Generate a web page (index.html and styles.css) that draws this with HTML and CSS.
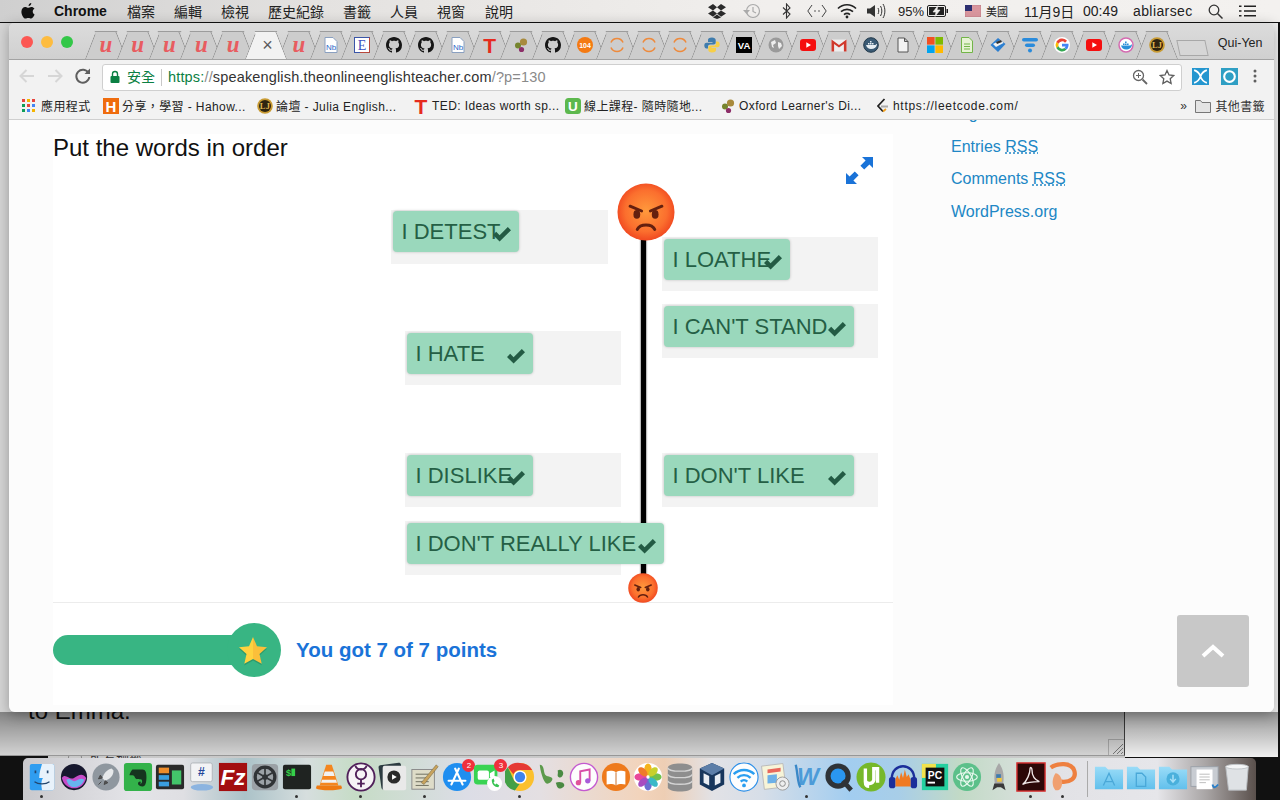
FILE: index.html
```html
<!DOCTYPE html>
<html lang="zh-Hant">
<head>
	<meta charset="UTF-8">
	<title>Put the words in order</title>
	<link rel="stylesheet" href="styles.css">
</head>
<body>

<svg class="defs" xmlns="http://www.w3.org/2000/svg">
	<defs>
		<radialGradient id="faceFill" cx="50%" cy="48%" r="56%">
			<stop offset="0%" stop-color="#ff9a3c"/>
			<stop offset="65%" stop-color="#fb6f2e"/>
			<stop offset="100%" stop-color="#ee3f1d"/>
		</radialGradient>
		<linearGradient id="folderFill" x1="0" y1="0" x2="0" y2="1">
			<stop offset="0%" stop-color="#9adcf8"/>
			<stop offset="100%" stop-color="#62c0ec"/>
		</linearGradient>
	</defs>

	<symbol id="face" viewBox="0 0 60 60">
		<circle cx="30" cy="30" r="29.5" fill="url(#faceFill)"/>
		<path d="M13.5 24l12 5M46.5 24l-12 5" stroke="#64200f" stroke-width="3" stroke-linecap="round"/>
		<ellipse cx="20.5" cy="32.5" rx="3.5" ry="4.5" fill="#64200f"/>
		<ellipse cx="39.5" cy="32.5" rx="3.5" ry="4.5" fill="#64200f"/>
		<path d="M21 48c3-6 15-6 18 0" fill="none" stroke="#64200f" stroke-width="3.2" stroke-linecap="round"/>
	</symbol>
	<symbol id="check" viewBox="0 0 20 16">
		<path d="M1 9l3.2-3.2 3.4 3.4L15.8 1 19 4.2 7.6 15.6z" fill="#235b44"/>
	</symbol>

	<!-- tab favicons -->
	<symbol id="f-gh" viewBox="0 0 16 16"><path fill="#161616" d="M8 0C3.58 0 0 3.58 0 8c0 3.54 2.29 6.53 5.47 7.59.4.07.55-.17.55-.38 0-.19-.01-.82-.01-1.49-2.01.37-2.53-.49-2.69-.94-.09-.23-.48-.94-.82-1.13-.28-.15-.68-.52-.01-.53.63-.01 1.08.58 1.23.82.72 1.21 1.87.87 2.33.66.07-.52.28-.87.51-1.07-1.78-.2-3.64-.89-3.64-3.95 0-.87.31-1.59.82-2.15-.08-.2-.36-1.02.08-2.12 0 0 .67-.21 2.2.82.64-.18 1.32-.27 2-.27.68 0 1.36.09 2 .27 1.53-1.04 2.2-.82 2.2-.82.44 1.1.16 1.92.08 2.12.51.56.82 1.27.82 2.15 0 3.07-1.87 3.75-3.65 3.95.29.25.54.73.54 1.48 0 1.07-.01 1.93-.01 2.2 0 .21.15.46.55.38A8.013 8.013 0 0016 8c0-4.42-3.58-8-8-8z"/></symbol>
	<symbol id="f-ox" viewBox="0 0 16 16"><circle cx="10.5" cy="5" r="3.6" fill="#a88a3c"/><circle cx="5" cy="8.5" r="3" fill="#76852e"/><circle cx="8.5" cy="12.5" r="2.6" fill="#8c2e68"/></symbol>
	<symbol id="f-ring" viewBox="0 0 16 16"><path d="M2 5.5a6.5 6.5 0 0 1 12 0M2 10.5a6.5 6.5 0 0 0 12 0" fill="none" stroke="#ee8a3c" stroke-width="1.6"/></symbol>
	<symbol id="f-py" viewBox="0 0 16 16"><path d="M8 .5c-3 0-4 1-4 2.5V5h4.500v.7H2.500C1 5.700.3 7 .3 8.500s.7 3 2.200 3H4V9.600c0-1.300 1-2.100 2.300-2.100h3.400c1.200 0 2-.9 2-2V3c0-1.500-1.500-2.500-3.700-2.500z" fill="#3f7cad"/><path d="M8 15.500c3 0 4-1 4-2.500v-2H7.500v-.7h6c1.500 0 2.200-1.300 2.200-2.800s-.7-3-2.200-3H12v1.900c0 1.300-1 2.100-2.300 2.100H6.300c-1.200 0-2 .9-2 2V13c0 1.500 1.500 2.500 3.700 2.500z" fill="#f7cf47"/></symbol>
	<symbol id="f-globe" viewBox="0 0 16 16"><circle cx="8" cy="8" r="7.5" fill="#9a9a9a"/><path d="M3 5l4-2 1 3-3 2 1 3-2-1zM10 5l3 1 1 3-3 3-1-3z" fill="#eee"/></symbol>
	<symbol id="f-yt" viewBox="0 0 16 16"><rect y="2" width="16" height="12" rx="3" fill="#f50f0f"/><path d="M6.300 5.200L11 8l-4.700 2.800z" fill="#fff"/></symbol>
	<symbol id="f-gm" viewBox="0 0 16 16"><path d="M.5 2.500h15v12h-15z" fill="#eee"/><path d="M.5 14.500v-12L8 8l7.500-5.500v12h-2.600V7L8 10.600 3.100 7v7.500z" fill="#d0392c"/></symbol>
	<symbol id="f-dk" viewBox="0 0 16 16"><circle cx="8" cy="8" r="7.3" fill="#3a5a74" stroke="#22384a"/><path d="M3 8h9.500c.5-1 1.200-1 1.500-.8-.3 3-2.600 4.800-6 4.800-2.500 0-4.200-1.400-5-4z" fill="#e8eef2"/><path d="M5 6h1.500v1.500H5zm2 0h1.500v1.500H7zm2 0h1.500v1.500H9zM7 4h1.500v1.500H7z" fill="#e8eef2"/></symbol>
	<symbol id="f-doc" viewBox="0 0 16 16"><path d="M3 1h6.500L13 4.500V15H3zM9.500 1v3.500H13" fill="#f2f2f2" stroke="#555" stroke-width="1"/></symbol>
	<symbol id="f-ms" viewBox="0 0 16 16"><rect width="7.6" height="7.6" fill="#f25022"/><rect x="8.4" width="7.6" height="7.6" fill="#7fba00"/><rect y="8.4" width="7.6" height="7.6" fill="#00a4ef"/><rect x="8.4" y="8.4" width="7.6" height="7.6" fill="#ffb900"/></symbol>
	<symbol id="f-sheet" viewBox="0 0 16 16"><path d="M2.500.5h7.500l3.500 3.500v11.500h-11z" fill="#e6f3d4" stroke="#72b548"/><path d="M5 7h6M5 9.500h6M5 12h6" stroke="#72b548" stroke-width="1.200"/></symbol>
	<symbol id="f-dia" viewBox="0 0 16 16"><path d="M8 1l7.500 6L8 15 .5 8z" fill="#2d7fd0"/><path d="M3 7l8-4 2.500 3L6 10z" fill="#f1f1f1"/><path d="M6 5l5-2 1 2-5 2z" fill="#333"/></symbol>
	<symbol id="f-fil" viewBox="0 0 16 16"><rect y="1" width="16" height="3.6" rx="1.8" fill="#2a8bdb"/><rect x="3" y="6.4" width="10" height="3.6" rx="1.8" fill="#2a8bdb"/><circle cx="8" cy="13.5" r="2" fill="#2a8bdb"/></symbol>
	<symbol id="f-g" viewBox="0 0 16 16"><circle cx="8" cy="8" r="8" fill="#fff"/><path d="M13 3.800A6.500 6.500 0 0 0 2.300 5l2.300 1.800A3.700 3.700 0 0 1 11 5.800z" fill="#ea4335"/><path d="M2.300 5a6.500 6.500 0 0 0 0 6l2.300-1.800a3.700 3.700 0 0 1 0-2.400z" fill="#fbbc05"/><path d="M2.300 11a6.500 6.500 0 0 0 10.300 1.600l-2.200-1.700A3.700 3.700 0 0 1 4.600 9.200z" fill="#34a853"/><path d="M14.500 6.700H8v2.700h3.600c-.2.700-.6 1.100-1.200 1.500l2.200 1.700c1.500-1.400 2.200-3.500 1.900-5.900z" fill="#4285f4"/></symbol>
	<symbol id="f-dc" viewBox="0 0 16 16"><circle cx="8" cy="8" r="7" fill="#fff" stroke="#d46bb0" stroke-width="1.5"/><path d="M3 8.500h9.500c.5-1 1.200-1 1.500-.8-.3 2.800-2.600 4.800-6 4.800-2.500 0-4.200-1.500-5-4z" fill="#2a8fd8"/><path d="M5 6.500h1.600v1.600H5zm2 0h1.600v1.600H7zm2 0h1.600v1.600H9zM7 4.500h1.600v1.600H7z" fill="#2a8fd8"/></symbol>
	<symbol id="f-lc" viewBox="0 0 16 16"><path d="M10.500 1L4 8l5 5.500" fill="none" stroke="#222" stroke-width="1.800"/><path d="M7 8.500h7" stroke="#aaa" stroke-width="1.800"/><path d="M9 13.500l3-2.500" stroke="#f0a020" stroke-width="1.800"/></symbol>

	<!-- dock icons -->
	<symbol id="d-finder" viewBox="0 0 32 32"><rect x="3" y="2" width="26" height="28" rx="2" fill="#2f9df0"/><path d="M16 2h11a2 2 0 0 1 2 2v24a2 2 0 0 1-2 2H16c-1-6-1-10 1-13h-4c0-6 2-11 3-15z" fill="#e8f2fb"/><path d="M9 9v3M22 9v3" stroke="#23466e" stroke-width="1.8"/><path d="M8 21c4 3 12 3 16 0" fill="none" stroke="#23466e" stroke-width="1.3"/></symbol>
	<symbol id="d-siri" viewBox="0 0 32 32"><circle cx="16" cy="16" r="14" fill="#17182e"/><path d="M3 17c4-6 8 3 13 0s9-6 13 0c-2 8-7 11-13 11S5 24 3 17z" fill="#c64cc8"/><path d="M8 19c4-3 6 3 10 1s6-3 9-1c-2 5-6 8-11 8s-7-4-8-8z" fill="#67b5ee"/></symbol>
	<symbol id="d-rocket" viewBox="0 0 32 32"><circle cx="16" cy="16" r="14.5" fill="#8f979f"/><path d="M22 7c-5 1-8 5-10 10l3 3c5-2 9-5 9-11z" fill="#e6e8ea"/><path d="M12 17l-4 1 2-4zM15 20l-1 4 4-2zM11 21l-3 3" stroke="#444" fill="#555"/></symbol>
	<symbol id="d-ever" viewBox="0 0 32 32"><rect x="1" y="1" width="30" height="30" rx="3" fill="#33b24a"/><path d="M10 8h11c3 0 4 3 4 8 0 6-1 10-4 10-3 0-5-1-5-3s3-3 3-1c-1 0-1 1 0 1 1 0 2-2 1-4-1-1-6 0-7-2-1-2-1-3-3-3H7c0-2 3-6 3-6z" fill="#16351f"/></symbol>
	<symbol id="d-panes" viewBox="0 0 32 32"><rect x="1" y="3" width="30" height="26" rx="2" fill="#2a2a2a"/><rect x="4" y="6" width="11" height="6" fill="#ef8c2a"/><rect x="4" y="14" width="11" height="5" fill="#3a9ee0"/><rect x="4" y="21" width="11" height="5" fill="#3a9ee0"/><rect x="18" y="9" width="10" height="15" fill="#43c46a"/></symbol>
	<symbol id="d-gear" viewBox="0 0 32 32"><rect x="2" y="2" width="28" height="28" rx="4" fill="#9ba1a6"/><circle cx="16" cy="16" r="10.5" fill="none" stroke="#303336" stroke-width="3.5"/><circle cx="16" cy="16" r="3" fill="#303336"/><path d="M16 6v20M7 11l18 10M25 11L7 21" stroke="#303336" stroke-width="1.8"/></symbol>
	<symbol id="d-vlc" viewBox="0 0 32 32"><path d="M13 3h6l7 22H6z" fill="#f4861f"/><path d="M11.500 10h9l1.500 5H10zM8.500 19h15l1 3h-17z" fill="#f2f2f2"/><path d="M3 25h26l1 3c-4 3-24 3-28 0z" fill="#ee7a12"/></symbol>
	<symbol id="d-venus" viewBox="0 0 32 32"><circle cx="16" cy="16" r="14.5" fill="#f6f3f6" stroke="#50205a" stroke-width="2"/><circle cx="16" cy="13" r="5.5" fill="none" stroke="#50205a" stroke-width="2"/><path d="M16 18.500V27M12 23h8M10 4c1 3 3 4 6 4s5-1 6-4" fill="none" stroke="#50205a" stroke-width="2"/></symbol>
	<symbol id="d-player" viewBox="0 0 32 32"><rect x="2" y="2" width="24" height="26" rx="2" fill="#2c3a40" transform="rotate(-8 14 15)"/><rect x="5" y="4" width="25" height="26" rx="2" fill="#e9e9e9"/><circle cx="17" cy="16" r="7" fill="#2a2a2a"/><path d="M15 13l5 3-5 3z" fill="#fff"/></symbol>
	<symbol id="d-pen" viewBox="0 0 32 32"><rect x="2" y="8" width="24" height="21" fill="#dedcc8" stroke="#888"/><path d="M6 13h14M6 17h14M6 21h14M6 25h14" stroke="#6a6a5a"/><path d="M12 22L28 3l2 2-15 19z" fill="#c8a35c" stroke="#6a5a3a" stroke-width=".5"/></symbol>
	<symbol id="d-app" viewBox="0 0 32 32"><circle cx="16" cy="16" r="15" fill="#1f8ef0"/><path d="M10 24L18 7M22 24L14 7M7 20h18" stroke="#fff" stroke-width="2.2" stroke-linecap="round"/></symbol>
	<symbol id="d-ft" viewBox="0 0 32 32"><rect x="1" y="3" width="25" height="21" rx="4" fill="#39d353"/><rect x="5" y="9" width="12" height="10" rx="2" fill="#fff"/><path d="M18 12l5-3v10l-5-3z" fill="#fff"/><circle cx="23" cy="23" r="8" fill="#fff"/><path d="M20 19c0 5 3 8 7 8l1-2-3-2-1 1c-1-.5-1.800-1.500-2-2.500l1-1-1-3z" fill="#39c353"/></symbol>
	<symbol id="d-chrome" viewBox="0 0 32 32"><circle cx="16" cy="16" r="15" fill="#fbc02d"/><path d="M16 1a15 15 0 0 1 13 7.500H16a7.500 7.500 0 0 0-7 4.500L3 5.500A15 15 0 0 1 16 1z" fill="#e53935"/><path d="M3 5.500L9.500 19.500a7.500 7.500 0 0 0 6 4l-5 7A15 15 0 0 1 3 5.500z" fill="#43a047"/><circle cx="16" cy="16" r="7" fill="#fff"/><circle cx="16" cy="16" r="5.5" fill="#3f83ee"/></symbol>
	<symbol id="d-chair" viewBox="0 0 32 32"><path d="M3 3c4 0 4 5 5 9s6 3 8 5-3 7-6 6-7-15-7-20z" fill="#5c9a4c"/><path d="M22 9c3-2 6 0 6 3s-3 6-5 4 0-3-1-7zM20 22c3-1 8-1 9 2s-4 5-6 4-2-4-3-6z" fill="#4a8a42"/></symbol>
	<symbol id="d-music" viewBox="0 0 32 32"><circle cx="16" cy="16" r="14.5" fill="#fdfdfd" stroke="#c45ad0" stroke-width="1.5"/><path d="M12 22V10l10-2v12" fill="none" stroke="#d84ea8" stroke-width="2"/><circle cx="10" cy="22" r="2.8" fill="#e0529a"/><circle cx="20" cy="20" r="2.8" fill="#a85ad8"/></symbol>
	<symbol id="d-book" viewBox="0 0 32 32"><circle cx="16" cy="16" r="15" fill="#ee7a1c"/><path d="M6 10c3-1 7-1 10 1 3-2 7-2 10-1v14c-3-1-7-1-10 1-3-2-7-2-10-1z" fill="#fff"/><path d="M16 11v14" stroke="#c86a20"/></symbol>
	<symbol id="d-photos" viewBox="0 0 32 32"><circle cx="16" cy="16" r="15" fill="#fff"/><ellipse cx="16" cy="8" rx="4" ry="6.5" fill="#f4b31c"/><ellipse cx="16" cy="24" rx="4" ry="6.5" fill="#6a6ed0"/><ellipse cx="8" cy="16" rx="6.5" ry="4" fill="#e9489a"/><ellipse cx="24" cy="16" rx="6.5" ry="4" fill="#72c04c"/><ellipse cx="10.5" cy="10.5" rx="6" ry="3.6" fill="#ef7a2c" transform="rotate(45 10.5 10.5)"/><ellipse cx="21.5" cy="21.5" rx="6" ry="3.6" fill="#3ab8c8" transform="rotate(45 21.5 21.5)"/><ellipse cx="21.5" cy="10.5" rx="6" ry="3.6" fill="#c8d02c" transform="rotate(-45 21.5 10.5)"/><ellipse cx="10.5" cy="21.5" rx="6" ry="3.6" fill="#a84cc0" transform="rotate(-45 10.5 21.5)"/></symbol>
	<symbol id="d-db" viewBox="0 0 32 32"><path d="M3 6c0-6 26-6 26 0v21c0 6-26 6-26 0z" fill="#8e8e8e"/><path d="M3 6c0 5 26 5 26 0M3 13c0 5 26 5 26 0M3 20c0 5 26 5 26 0" fill="none" stroke="#d4d4d4" stroke-width="1.4"/></symbol>
	<symbol id="d-vbox" viewBox="0 0 32 32"><path d="M16 1l13 6v17l-13 7-13-7V7z" fill="#17365c"/><path d="M16 1l13 6-13 7L3 7z" fill="#5c7ea8"/><path d="M7 12l6 3v10l-6-3zM19 15l6-3v10l-6 3z" fill="#e8edf3"/></symbol>
	<symbol id="d-wifi" viewBox="0 0 32 32"><circle cx="16" cy="16" r="15" fill="#fdfdfd" stroke="#2a8ee8" stroke-width="1.2"/><path d="M5 13c6-6 16-6 22 0M9 17c4-4 10-4 14 0M12.500 21c2-2 5-2 7 0" fill="none" stroke="#2a9ef0" stroke-width="2.5"/><circle cx="16" cy="25" r="2" fill="#2a9ef0"/></symbol>
	<symbol id="d-prev" viewBox="0 0 32 32"><rect x="3" y="3" width="23" height="25" fill="#f7f4d8" stroke="#bbb" transform="rotate(-7 14 15)"/><path d="M8 8l14-2v4L8 12z" fill="#e8685c"/><path d="M8 14l10-1v9l-10 1z" fill="#6cb0e8"/><circle cx="24" cy="23" r="7" fill="#eee" stroke="#999"/><circle cx="24" cy="23" r="3" fill="none" stroke="#888"/></symbol>
	<symbol id="d-q" viewBox="0 0 32 32"><circle cx="15" cy="15" r="13.5" fill="#2f3338"/><circle cx="15" cy="15" r="8" fill="#2a96f0"/><path d="M20 20l9 10" stroke="#2f3338" stroke-width="5"/></symbol>
	<symbol id="d-ut" viewBox="0 0 32 32"><circle cx="16" cy="16" r="15.5" fill="#76b82a"/><path d="M10 7v14c0 5 2 5 4 5M10 20c1 4 8 4 9-1V7h4v15" fill="none" stroke="#fff" stroke-width="3.6"/></symbol>
	<symbol id="d-aud" viewBox="0 0 32 32"><path d="M4 18C4 0 28 0 28 18" fill="none" stroke="#1b2e9a" stroke-width="2.5"/><rect x="1" y="16" width="7" height="12" rx="3" fill="#1b2e9a"/><rect x="24" y="16" width="7" height="12" rx="3" fill="#1b2e9a"/><path d="M8 26V18l2-4 2 5 2-8 2 6 2-9 2 8 2-3 2 6v7z" fill="#f07a22"/></symbol>
	<symbol id="d-atom" viewBox="0 0 32 32"><circle cx="16" cy="16" r="15" fill="#5cc08a"/><ellipse cx="16" cy="16" rx="11" ry="4.5" fill="none" stroke="#e8f8ee" stroke-width="1.2" transform="rotate(60 16 16)"/><ellipse cx="16" cy="16" rx="11" ry="4.5" fill="none" stroke="#e8f8ee" stroke-width="1.2" transform="rotate(-60 16 16)"/><ellipse cx="16" cy="16" rx="11" ry="4.5" fill="none" stroke="#e8f8ee" stroke-width="1.2"/><circle cx="16" cy="16" r="2.2" fill="#e8f8ee"/></symbol>
	<symbol id="d-pyr" viewBox="0 0 32 32"><path d="M16 1c5 7 6 15 4 24h-8C10 16 11 8 16 1z" fill="#a8a8a8"/><path d="M13 13h5v4h-5z" fill="#3f7cad"/><path d="M14 17h5v4h-5z" fill="#f0c840"/><path d="M11 23l-2 7 5-3h4l5 3-2-7z" fill="#3a3a3a"/></symbol>
	<symbol id="d-acro" viewBox="0 0 32 32"><rect x="1" y="1" width="30" height="30" fill="#2c0808" stroke="#d83030" stroke-width="1.5"/><path d="M7 24c5-4 8-12 8-17 0-2 2-1 2 1 0 6 3 11 8 13-5 0-12 0-18 3z" fill="none" stroke="#f2e8e8" stroke-width="1.4"/></symbol>
	<symbol id="d-p" viewBox="0 0 32 32"><path d="M4 6c7-5 22-6 25 3s-5 13-14 12" fill="none" stroke="#ee8040" stroke-width="4.5"/><path d="M9 12c-4 6-4 14 0 18 5 1 6-2 7-6s-2-12-7-12z" fill="#f0a070"/></symbol>
	<symbol id="d-fa" viewBox="0 0 32 32"><path d="M1 5h11l3 3h16v21H1z" fill="url(#folderFill)"/><path d="M10 25l6-13 6 13M12 21h8" fill="none" stroke="#4aa8d8" stroke-width="1.4"/></symbol>
	<symbol id="d-fd" viewBox="0 0 32 32"><path d="M1 5h11l3 3h16v21H1z" fill="url(#folderFill)"/><path d="M11 12h6l4 4v10H11z" fill="none" stroke="#4aa8d8" stroke-width="1.4"/></symbol>
	<symbol id="d-fg" viewBox="0 0 32 32"><path d="M1 5h11l3 3h16v21H1z" fill="url(#folderFill)"/><circle cx="16" cy="18" r="7" fill="#4ab0dc"/><path d="M16 13.500v7M13 18l3 3.500 3-3.500" fill="none" stroke="#a8e0f8" stroke-width="1.6"/></symbol>
	<symbol id="d-sheet" viewBox="0 0 32 32"><rect x="1" y="5" width="29" height="21" fill="#c8ccd2" stroke="#9aa0a8"/><rect x="7" y="8" width="17" height="21" fill="#fff"/><path d="M10 13h11M10 16h11M10 19h11M10 22h7" stroke="#bbb"/><path d="M24 24c1 4 3 4 6 0" fill="none" stroke="#2a7fc8" stroke-width="2"/></symbol>
	<symbol id="d-trash" viewBox="0 0 32 32"><path d="M4 5h24l-2 25H7z" fill="#dfe2e5" stroke="#b8bcc0"/><ellipse cx="16" cy="5" rx="12" ry="2.5" fill="#f4f5f6" stroke="#c0c4c8"/></symbol>
</svg>

<div class="menubar">
	<span class="apple"><svg viewBox="0 0 14 16" width="14" height="16"><path d="M10.300 0c.1 1.200-.9 2.900-2.700 3C7.400 1.700 8.700.2 10.300 0zM13.600 11.600c-.6 1.500-2 4-3.400 4-1.100 0-1.500-.7-2.900-.7s-1.800.7-2.900.7C2.500 15.600.4 11.900.4 8.800.4 5.800 2.300 4 4.200 4c1.200 0 2.200.8 3 .8.700 0 1.900-.9 3.300-.8 1 0 2.200.5 3 1.600-2.500 1.500-2.200 5 .1 6z" fill="#111"/></svg></span>
	<b class="app-name">Chrome</b>
	<span class="menu-item">檔案</span>
	<span class="menu-item">編輯</span>
	<span class="menu-item">檢視</span>
	<span class="menu-item">歷史紀錄</span>
	<span class="menu-item">書籤</span>
	<span class="menu-item">人員</span>
	<span class="menu-item">視窗</span>
	<span class="menu-item">說明</span>

	<div class="status">
		<svg class="st-drop" viewBox="0 0 18 16" width="18" height="16"><path d="M5 1L0 4.200l5 3.200 4-3.200zM13 1L9 4.200l4 3.200 5-3.200zM0 10.600l5 3.200 4-3.200-4-3.200zM13 7.400l-4 3.200 4 3.200 5-3.200zM5 14.600L9 11.500l4 3.100-4 1.400z" fill="#2b2b2b"/></svg>
		<svg class="st-clock" viewBox="0 0 18 16" width="18" height="16"><circle cx="10" cy="8" r="6.500" fill="none" stroke="#aaa" stroke-width="1.200"/><path d="M10 4v4.500l3 1.500" fill="none" stroke="#aaa" stroke-width="1.200"/><path d="M0 7h7l-3.500 4z" fill="#aaa"/></svg>
		<svg class="st-bt" viewBox="0 0 9 16" width="9" height="16"><path d="M1 4.500l7 6.500-3.500 4V1L8 5 1 11.500" fill="none" stroke="#333" stroke-width="1.100"/></svg>
		<svg class="st-code" viewBox="0 0 20 16" width="20" height="16"><path d="M5 2L.8 8 5 14M15 2l4.200 6L15 14" fill="none" stroke="#444" stroke-width="1"/><circle cx="8" cy="8" r=".8" fill="#444"/><circle cx="12" cy="8" r=".8" fill="#444"/></svg>
		<svg class="st-wifi" viewBox="0 0 20 16" width="20" height="16"><path d="M1 5.500c5-5 13-5 18 0M4 8.700c3.500-3.200 8.500-3.200 12 0M7 11.700c1.800-1.500 4.200-1.500 6 0" fill="none" stroke="#222" stroke-width="1.700"/><circle cx="10" cy="14" r="1.400" fill="#222"/></svg>
		<svg class="st-vol" viewBox="0 0 20 16" width="20" height="16"><path d="M0 5.500h3L8 2v12l-5-3.500H0z" fill="#333"/><path d="M11 5c1 2 1 4 0 6M13.500 3c1.800 3 1.800 7 0 10M16 1c2.500 4 2.500 10 0 14" fill="none" stroke="#333" stroke-width="1"/></svg>
		<span class="st-pct">95%</span>
		<svg class="st-bat" viewBox="0 0 22 12" width="22" height="12"><rect x=".5" y=".5" width="18" height="11" rx="1.500" fill="none" stroke="#222"/><rect x="2" y="2" width="15" height="8" fill="#222"/><path d="M11 .5L6 7h3l-1 4.500L13 5h-3z" fill="#f0eeec" stroke="#f0eeec" stroke-width=".6"/><rect x="19.500" y="4" width="1.500" height="4" fill="#222"/></svg>
		<svg class="st-flag" viewBox="0 0 16 12" width="16" height="12"><rect width="16" height="12" fill="#fff" stroke="#999" stroke-width=".4"/><path d="M0 1h16M0 3h16M0 5h16M0 7h16M0 9h16M0 11h16" stroke="#b22c3c"/><rect width="7" height="6" fill="#2c2f70"/></svg>
		<span class="st-lang">美國</span>
		<span class="st-date">11月9日</span>
		<span class="st-time">00:49</span>
		<span class="st-user">abliarsec</span>
		<svg class="st-search" viewBox="0 0 15 15" width="15" height="15"><circle cx="6" cy="6" r="4.800" fill="none" stroke="#333" stroke-width="1.300"/><path d="M9.500 9.500l5 5" stroke="#333" stroke-width="1.500"/></svg>
		<svg class="st-list" viewBox="0 0 17 12" width="17" height="12"><path d="M5 1.200h12M5 6h12M5 10.800h12" stroke="#222" stroke-width="1.600"/><path d="M0 1.200h2.500M0 6h2.500M0 10.800h2.500" stroke="#222" stroke-width="1.600"/></svg>
	</div>
</div>

<div class="desktop">
	<div class="far-window"></div>
	<div class="back-strip"><span class="strip-box"></span>所有標籤...</div>
	<div class="back-window">
		<p class="back-text">to Emma.</p>
		<svg class="grip" viewBox="0 0 15 15" width="15" height="15"><path d="M4 14L14 4M8 14l6-6M12 14l2-2" stroke="#777" stroke-width="1"/></svg>
	</div>
	<div class="shade"></div>

	<div class="browser">
		<div class="tabstrip">
			<span class="light red"></span><span class="light yellow"></span><span class="light green"></span>
			<div class="tabs">
				<div class="tab"><span class="fav-letter fav-u">u</span></div>
				<div class="tab"><span class="fav-letter fav-u">u</span></div>
				<div class="tab"><span class="fav-letter fav-u">u</span></div>
				<div class="tab"><span class="fav-letter fav-u">u</span></div>
				<div class="tab"><span class="fav-letter fav-u">u</span></div>
				<div class="tab active"><span class="tab-close">×</span></div>
				<div class="tab"><span class="fav-letter fav-u">u</span></div>
				<div class="tab"><svg class="fav" viewBox="0 0 16 16"><path d="M2 .5h8l4 4v11H2z" fill="#fff" stroke="#8aa0c0"/><text class="fav-nb" x="8" y="12.500" text-anchor="middle">Nb</text></svg></div>
				<div class="tab"><svg class="fav" viewBox="0 0 16 16"><rect x=".5" y=".5" width="15" height="15" fill="#fff" stroke="#3a55a8"/><path d="M15.500 .5v15H6" fill="none" stroke="#b8483c"/><text class="fav-e" x="8" y="13" text-anchor="middle">E</text></svg></div>
				<div class="tab"><svg class="fav"><use href="#f-gh"/></svg></div>
				<div class="tab"><svg class="fav"><use href="#f-gh"/></svg></div>
				<div class="tab"><svg class="fav" viewBox="0 0 16 16"><path d="M2 .5h8l4 4v11H2z" fill="#fff" stroke="#8aa0c0"/><text class="fav-nb" x="8" y="12.500" text-anchor="middle">Nb</text></svg></div>
				<div class="tab"><span class="fav-letter fav-t">T</span></div>
				<div class="tab"><svg class="fav"><use href="#f-ox"/></svg></div>
				<div class="tab"><svg class="fav"><use href="#f-gh"/></svg></div>
				<div class="tab"><svg class="fav" viewBox="0 0 16 16"><circle cx="8" cy="8" r="8" fill="#f47a12"/><text class="fav-104" x="8" y="10.500" text-anchor="middle">104</text></svg></div>
				<div class="tab"><svg class="fav"><use href="#f-ring"/></svg></div>
				<div class="tab"><svg class="fav"><use href="#f-ring"/></svg></div>
				<div class="tab"><svg class="fav"><use href="#f-ring"/></svg></div>
				<div class="tab"><svg class="fav"><use href="#f-py"/></svg></div>
				<div class="tab"><svg class="fav" viewBox="0 0 16 16"><rect width="16" height="16" fill="#000"/><text class="fav-va" x="8" y="12" text-anchor="middle">VA</text></svg></div>
				<div class="tab"><svg class="fav"><use href="#f-globe"/></svg></div>
				<div class="tab"><svg class="fav"><use href="#f-yt"/></svg></div>
				<div class="tab"><svg class="fav"><use href="#f-gm"/></svg></div>
				<div class="tab"><svg class="fav"><use href="#f-dk"/></svg></div>
				<div class="tab"><svg class="fav"><use href="#f-doc"/></svg></div>
				<div class="tab"><svg class="fav"><use href="#f-ms"/></svg></div>
				<div class="tab"><svg class="fav"><use href="#f-sheet"/></svg></div>
				<div class="tab"><svg class="fav"><use href="#f-dia"/></svg></div>
				<div class="tab"><svg class="fav"><use href="#f-fil"/></svg></div>
				<div class="tab"><svg class="fav"><use href="#f-g"/></svg></div>
				<div class="tab"><svg class="fav"><use href="#f-yt"/></svg></div>
				<div class="tab"><svg class="fav"><use href="#f-dc"/></svg></div>
				<div class="tab"><svg class="fav" viewBox="0 0 16 16"><circle cx="8" cy="8" r="7.800" fill="#c89a32"/><circle cx="8" cy="8" r="6" fill="#2e2410"/><text class="fav-lj" x="8" y="11" text-anchor="middle">LJ</text></svg></div>
			</div>
			<span class="new-tab"></span>
			<span class="profile">Qui-Yen</span>
		</div>

		<div class="toolbar">
			<svg class="tool" viewBox="0 0 28 26"><path d="M21 13H8M13.500 7L7.500 13l6 6" fill="none" stroke="#d6d6d6" stroke-width="2"/></svg>
			<svg class="tool" viewBox="0 0 28 26"><path d="M7 13h13M14.500 7l6 6-6 6" fill="none" stroke="#d6d6d6" stroke-width="2"/></svg>
			<svg class="tool" viewBox="0 0 28 26"><path d="M19.500 10a6.500 6.500 0 1 0 .8 4" fill="none" stroke="#5f5f5f" stroke-width="2"/><path d="M21 5.500V11h-5.500z" fill="#5f5f5f"/></svg>
			<div class="omnibox">
				<svg class="lock" viewBox="0 0 12 14" width="12" height="14"><path d="M3.500 6V4a2.500 2.500 0 0 1 5 0v2" fill="none" stroke="#0b8043" stroke-width="1.400"/><rect x="1.500" y="6" width="9" height="7" rx="1" fill="#0b8043"/></svg>
				<span class="secure">安全</span>
				<span class="url"><span class="url-green">https:</span><span class="url-dim">//</span>speakenglish.theonlineenglishteacher.com<span class="url-dim">/?p=130</span></span>
				<svg class="omni-icon" viewBox="0 0 16 16" width="16" height="16"><circle cx="6.500" cy="6.500" r="5" fill="none" stroke="#666" stroke-width="1.300"/><path d="M10.500 10.500l4.500 4.500" stroke="#666" stroke-width="1.800"/><path d="M4 6.500h5M6.500 4v5" stroke="#666"/></svg>
				<svg class="omni-icon star" viewBox="0 0 16 16" width="16" height="16"><path d="M8 1.500l2 4.400 4.700.6-3.500 3.200.9 4.800L8 12.100l-4.100 2.400.9-4.800L1.300 6.500 6 5.900z" fill="none" stroke="#5f5f5f" stroke-width="1.300"/></svg>
			</div>
			<svg class="ext first" viewBox="0 0 16 16"><rect width="16" height="16" fill="#2596cf"/><path d="M2 2c3 1 5 3 6 6-1 3-3 5-6 6M14 2c-3 1-5 3-6 6 1 3 3 5 6 6" fill="none" stroke="#fff" stroke-width="1.600"/></svg>
			<svg class="ext" viewBox="0 0 16 16"><rect width="16" height="16" fill="#2f9fc4"/><circle cx="8" cy="8" r="5" fill="none" stroke="#fff" stroke-width="2"/></svg>
			<svg class="dots" viewBox="0 0 4 16" width="4" height="16"><circle cx="2" cy="3" r="1.500" fill="#5f5f5f"/><circle cx="2" cy="8" r="1.500" fill="#5f5f5f"/><circle cx="2" cy="13" r="1.500" fill="#5f5f5f"/></svg>
		</div>

		<div class="bookmarks">
			<span class="bm"><svg class="bm-grid" viewBox="0 0 13 13" width="13" height="13"><path d="M0 0h3v3H0z" fill="#e8453c"/><path d="M5 0h3v3H5z" fill="#f4b400"/><path d="M10 0h3v3h-3z" fill="#e8453c"/><path d="M0 5h3v3H0z" fill="#0f9d58"/><path d="M5 5h3v3H5z" fill="#e8453c"/><path d="M10 5h3v3h-3z" fill="#4285f4"/><path d="M0 10h3v3H0z" fill="#0f9d58"/><path d="M5 10h3v3H5z" fill="#4285f4"/><path d="M10 10h3v3h-3z" fill="#f4b400"/></svg>應用程式</span>
			<span class="bm"><svg class="fav" viewBox="0 0 16 16"><rect width="16" height="16" fill="#ef6c0e"/><text class="fav-h" x="8" y="13.500" text-anchor="middle">H</text></svg>分享，學習 - Hahow...</span>
			<span class="bm"><svg class="fav" viewBox="0 0 16 16"><circle cx="8" cy="8" r="7.800" fill="#c89a32"/><circle cx="8" cy="8" r="6" fill="#2e2410"/><text class="fav-lj" x="8" y="11" text-anchor="middle">LJ</text></svg>論壇 - Julia English...</span>
			<span class="bm"><span class="fav-letter fav-t">T</span>TED: Ideas worth sp...</span>
			<span class="bm"><svg class="fav" viewBox="0 0 16 16"><rect width="16" height="16" rx="3.500" fill="#5cb84d"/><text class="fav-ug" x="8" y="13" text-anchor="middle">U</text></svg>線上課程- 隨時隨地...</span>
			<span class="bm"><svg class="fav"><use href="#f-ox"/></svg>Oxford Learner's Di...</span>
			<span class="bm bm-leet"><svg class="fav"><use href="#f-lc"/></svg>https://leetcode.com/</span>
			<span class="bm bm-more">»<svg class="bm-folder" viewBox="0 0 16 14" width="16" height="14"><path d="M.5 1.500h5l1.500 2h8.500v10H.5z" fill="#e4e4e4" stroke="#777"/></svg>其他書籤</span>
		</div>

		<div class="page">
			<div class="panel">
				<div class="activity">
					<h1 class="task-title">Put the words in order</h1>
					<svg class="expand" viewBox="0 0 27 27"><path d="M16 0h11v11l-3.600-3.600-5.200 5.200-3.800-3.800 5.200-5.200zM11 27H0V16l3.600 3.600 5.200-5.200 3.800 3.800-5.200 5.200z" fill="#1a73d8"/></svg>

					<div class="axis"></div>
					<svg class="face face-big"><use href="#face"/></svg>
					<svg class="face face-small"><use href="#face"/></svg>

					<div class="zone z-detest"><div class="chip">I DETEST<svg class="tick"><use href="#check"/></svg></div></div>
					<div class="zone z-loathe"><div class="chip">I LOATHE<svg class="tick"><use href="#check"/></svg></div></div>
					<div class="zone z-stand"><div class="chip chip-mid">I CAN'T STAND<svg class="tick"><use href="#check"/></svg></div></div>
					<div class="zone z-hate"><div class="chip">I HATE<svg class="tick"><use href="#check"/></svg></div></div>
					<div class="zone z-dislike"><div class="chip">I DISLIKE<svg class="tick"><use href="#check"/></svg></div></div>
					<div class="zone z-dontlike"><div class="chip chip-mid">I DON'T LIKE<svg class="tick"><use href="#check"/></svg></div></div>
					<div class="zone z-really"><div class="chip chip-long">I DON'T REALLY LIKE<svg class="tick"><use href="#check"/></svg></div></div>
				</div>

				<div class="score">
					<div class="score-bar">
						<div class="score-star">
							<svg viewBox="0 0 32 32" width="32" height="32">
								<path d="M16 3l4 9.200 10 1-7.500 6.700 2.200 9.800L16 25l-8.700 5 2.200-9.800L2 13.200l10-1z" fill="#2c9a6e" transform="translate(0 1.500)"/>
								<path d="M16 3l4 9.200 10 1-7.500 6.700 2.200 9.800L16 25z" fill="#fbbf3a"/>
								<path d="M16 3l-4 9.200-10 1 7.500 6.700-2.200 9.800L16 25z" fill="#ffd23f"/>
							</svg>
						</div>
					</div>
					<span class="score-text">You got 7 of 7 points</span>
				</div>
			</div>

			<ul class="side-links">
				<li><a>Log in</a></li>
				<li><a>Entries <abbr>RSS</abbr></a></li>
				<li><a>Comments <abbr>RSS</abbr></a></li>
				<li><a>WordPress.org</a></li>
			</ul>

			<div class="to-top"><svg viewBox="0 0 24 14" width="24" height="14"><path d="M2 12l10-9 10 9" fill="none" stroke="#fff" stroke-width="4"/></svg></div>
		</div>
	</div>

	<div class="dock">
		<div class="dock-item running"><svg><use href="#d-finder"/></svg></div>
		<div class="dock-item"><svg><use href="#d-siri"/></svg></div>
		<div class="dock-item"><svg><use href="#d-rocket"/></svg></div>
		<div class="dock-item"><svg><use href="#d-ever"/></svg></div>
		<div class="dock-item"><svg><use href="#d-panes"/></svg></div>
		<div class="dock-item"><svg viewBox="0 0 32 32"><rect x="5" y="1" width="23" height="20" rx="2" fill="#f2f3f5" stroke="#b0b4ba"/><text class="dk-hash" x="16.500" y="15" text-anchor="middle">#</text><ellipse cx="17" cy="27" rx="12" ry="3.500" fill="#8cb4e0"/></svg></div>
		<div class="dock-item"><svg viewBox="0 0 32 32"><rect x="1" y="1" width="30" height="30" fill="#a30e10"/><text class="dk-fz" x="16" y="25" text-anchor="middle">Fz</text></svg></div>
		<div class="dock-item"><svg><use href="#d-gear"/></svg></div>
		<div class="dock-item running"><svg viewBox="0 0 32 32"><rect x="1" y="3" width="30" height="26" rx="2" fill="#1f2321"/><text class="dk-term" x="4" y="15">$</text><rect x="10" y="7" width="4" height="8" fill="#35d04a"/></svg></div>
		<div class="dock-item"><svg><use href="#d-vlc"/></svg></div>
		<div class="dock-item running"><svg><use href="#d-venus"/></svg></div>
		<div class="dock-item"><svg><use href="#d-player"/></svg></div>
		<div class="dock-item running"><svg><use href="#d-pen"/></svg></div>
		<div class="dock-item"><svg><use href="#d-app"/></svg><span class="badge">2</span></div>
		<div class="dock-item"><svg><use href="#d-ft"/></svg><span class="badge">3</span></div>
		<div class="dock-item running"><svg><use href="#d-chrome"/></svg></div>
		<div class="dock-item"><svg><use href="#d-chair"/></svg></div>
		<div class="dock-item"><svg><use href="#d-music"/></svg></div>
		<div class="dock-item"><svg><use href="#d-book"/></svg></div>
		<div class="dock-item"><svg><use href="#d-photos"/></svg></div>
		<div class="dock-item"><svg><use href="#d-db"/></svg></div>
		<div class="dock-item"><svg><use href="#d-vbox"/></svg></div>
		<div class="dock-item"><svg><use href="#d-wifi"/></svg></div>
		<div class="dock-item"><svg><use href="#d-prev"/></svg></div>
		<div class="dock-item running"><svg viewBox="0 0 32 32"><text class="dk-word" x="17" y="25" text-anchor="middle">W</text><path d="M4 3c2 8 2 20 5 24" fill="none" stroke="#3a88c8" stroke-width="2.500"/></svg></div>
		<div class="dock-item"><svg><use href="#d-q"/></svg></div>
		<div class="dock-item"><svg><use href="#d-ut"/></svg></div>
		<div class="dock-item"><svg><use href="#d-aud"/></svg></div>
		<div class="dock-item"><svg viewBox="0 0 32 32"><rect x="2" y="2" width="28" height="28" fill="#25d0a0"/><rect x="2" y="2" width="15" height="15" fill="#f2e24c"/><rect x="6" y="6" width="20" height="20" fill="#101010"/><text class="dk-pc" x="16" y="18" text-anchor="middle">PC</text><rect x="8" y="21" width="8" height="2" fill="#fff"/></svg></div>
		<div class="dock-item"><svg><use href="#d-atom"/></svg></div>
		<div class="dock-item"><svg><use href="#d-pyr"/></svg></div>
		<div class="dock-item running"><svg><use href="#d-acro"/></svg></div>
		<div class="dock-item running"><svg><use href="#d-p"/></svg></div>
		<div class="dock-sep"></div>
		<div class="dock-item"><svg><use href="#d-fa"/></svg></div>
		<div class="dock-item"><svg><use href="#d-fd"/></svg></div>
		<div class="dock-item"><svg><use href="#d-fg"/></svg></div>
		<div class="dock-item"><svg><use href="#d-sheet"/></svg></div>
		<div class="dock-item"><svg><use href="#d-trash"/></svg></div>
	</div>
</div>

</body>
</html>
```
FILE: styles.css
```css
html, body {
	margin: 0;
	padding: 0;
	width: 1280px;
	height: 800px;
	overflow: hidden;
	background-color: #111;
	font-family: "Liberation Sans", "Noto Sans CJK TC", sans-serif;
}

.defs {
	width: 0;
	height: 0;
	display: block;
}

/* menu bar */
.menubar {
	display: flex;
	align-items: center;
	height: 22px;
	border-bottom: 1px solid #111;
	background: linear-gradient(90deg, #cfcfcf, #e4e2e0 25%, #f1efed 60%, #f3f1ef);
	font-size: 14px;
	color: #222;
	white-space: nowrap;
}

.apple {
	display: flex;
	margin-left: 21px;
}

.app-name {
	margin-left: 19px;
	margin-right: 1px;
	width: 54px;
	color: #111;
}

.menu-item {
	margin-left: 19px;
}

.menu-item:last-of-type {
	margin-left: 20px;
}

.app-name + .menu-item {
	margin-left: 18px;
}

.status {
	display: flex;
	align-items: center;
	margin-left: auto;
	padding-right: 24px;
	font-size: 14px;
}

.status > * {
	flex: none;
}

.st-clock { margin-left: 17px; }
.st-bt { margin-left: 21px; }
.st-code { margin-left: 16px; }
.st-wifi { margin-left: 10px; }
.st-vol { margin-left: 10px; }
.st-pct { margin-left: 11px; width: 26px; font-size: 13px; }
.st-bat { margin-left: 3px; }
.st-flag { margin-left: 16px; }
.st-lang { margin-left: 5px; width: 22px; font-size: 11px; }
.st-date { margin-left: 16px; width: 50px; }
.st-time { margin-left: 9px; width: 37px; }
.st-user { margin-left: 13px; width: 60px; letter-spacing: 0.4px; }
.st-search { margin-left: 15px; }
.st-list { margin-left: 16px; }

/* desktop and the windows behind chrome */
.desktop {
	position: relative;
	height: 777px;
}

.far-window {
	position: absolute;
	left: 1125px;
	top: 0;
	width: 153px;
	height: 734px;
	background-color: #f0f0f0;
}

.back-strip {
	position: absolute;
	left: 48px;
	top: 725px;
	box-sizing: border-box;
	width: 1077px;
	height: 30px;
	padding-left: 20px;
	background-color: #c9c9c9;
	font-size: 13px;
	line-height: 24px;
	color: #333;
}

.strip-box {
	display: inline-block;
	width: 12px;
	height: 12px;
	margin-right: 8px;
	border: 1px solid #888;
	border-radius: 3px;
	vertical-align: middle;
}

.back-window {
	position: absolute;
	left: 0;
	top: 0;
	width: 1124px;
	height: 732px;
	display: flex;
	flex-direction: column;
	justify-content: flex-end;
	border-right: 1px solid #444;
	border-bottom: 1px solid #999;
	background-color: #d6d6d6;
}

.back-text {
	margin: 0 0 32px 28px;
	font-size: 24px;
	line-height: 25px;
	color: #111;
}

.grip {
	position: absolute;
	right: 0;
	bottom: 0;
	border-left: 1px solid #aaa;
	border-top: 1px solid #aaa;
}

/* shadow the browser window casts on what lies below it */
.shade {
	position: absolute;
	left: 0;
	top: 689px;
	width: 1278px;
	height: 45px;
	background: linear-gradient(rgba(0, 0, 0, 0.38), rgba(0, 0, 0, 0));
}

/* browser */
.browser {
	position: absolute;
	left: 9px;
	top: 0;
	width: 1265px;
	height: 689px;
	border-radius: 5px 5px 6px 6px;
	overflow: hidden;
	box-shadow: 0 3px 14px rgba(0, 0, 0, 0.3);
}

.tabstrip {
	display: flex;
	align-items: flex-end;
	height: 36px;
	border-bottom: 1px solid #a3a3a3;
	background: linear-gradient(#dcdcdc, #d0d0d0);
}

.light {
	flex: none;
	align-self: flex-start;
	width: 12px;
	height: 12px;
	margin-top: 13px;
	margin-right: 8px;
	border-radius: 50%;
}

.light.red {
	margin-left: 12px;
	background-color: #fc5753;
}

.light.yellow {
	background-color: #fdbc40;
}

.light.green {
	background-color: #33c748;
}

.tabs {
	display: flex;
	flex: none;
	margin-left: 9px;
}

.tab {
	position: relative;
	z-index: 0;
	display: flex;
	justify-content: center;
	align-items: center;
	flex: none;
	width: 31.8px;
	height: 28px;
}

.tab::before, .tab::after {
	content: "";
	position: absolute;
	bottom: 0;
	top: 0;
	width: 22px;
	box-sizing: border-box;
	border-top: 1px solid #9c9c9c;
	background-color: #cdcdcd;
	z-index: -1;
}

.tab::before {
	right: 50%;
	margin-right: -1px;
	border-left: 1px solid #8f8f8f;
	border-top-left-radius: 2px;
	transform-origin: bottom;
	transform: skewX(-21deg);
}

.tab::after {
	left: 50%;
	margin-left: -1px;
	border-right: 1px solid #8f8f8f;
	border-top-right-radius: 2px;
	transform-origin: bottom;
	transform: skewX(21deg);
}

.tab.active {
	z-index: 1;
	width: 34px;
}

.tab.active::before, .tab.active::after {
	background-color: #f2f2f2;
}

.tab-close {
	margin-left: 3px;
	font-size: 18px;
	line-height: 18px;
	color: #5a5a5a;
}

.fav {
	width: 16px;
	height: 16px;
	flex: none;
}

/* favicons that are just a letter */
.fav-letter {
	display: flex;
	justify-content: center;
	flex: none;
	width: 16px;
	height: 16px;
	line-height: 16px;
	letter-spacing: 0;
}

.fav-u {
	font: italic bold 23px/15px "Liberation Serif", serif;
	color: #e85c60;
}

.fav-t {
	font: bold 21px/17px "Liberation Sans", sans-serif;
	color: #e62b1e;
}

/* letters inside the svg favicons */
.fav-nb { font: 8px "Liberation Sans", sans-serif; fill: #2a66c8; }
.fav-e { font: 14px "Liberation Serif", serif; fill: #3c50c0; }
.fav-104 { font: bold 7px "Liberation Sans", sans-serif; fill: #fff; }
.fav-va { font: bold 9.5px "Liberation Sans", sans-serif; fill: #fff; }
.fav-lj { font: bold 8.5px "Liberation Serif", serif; fill: #e0b850; }
.fav-h { font: bold 15px "Liberation Sans", sans-serif; fill: #fff; }
.fav-ug { font: bold 13.5px "Liberation Sans", sans-serif; fill: #fff; }

.new-tab {
	flex: none;
	align-self: flex-start;
	width: 27px;
	height: 14px;
	margin-top: 17px;
	margin-left: 4.5px;
	border: 1px solid #a8a8a8;
	background-color: #d6d6d6;
	transform: skewX(12deg);
}

.profile {
	flex: none;
	align-self: flex-start;
	margin-top: 13px;
	margin-left: 11px;
	font-size: 12.5px;
	line-height: 14px;
	color: #222;
	white-space: nowrap;
}

.toolbar {
	display: flex;
	align-items: center;
	height: 32px;
	padding: 0 3px 0 4px;
	background-color: #f2f2f2;
}

.tool {
	width: 28px;
	height: 26px;
	flex: none;
}

.omnibox {
	display: flex;
	align-items: center;
	flex: 1;
	height: 25px;
	margin: 2px 0 0 5px;
	border: 1px solid #cfcfcf;
	border-radius: 3px;
	background-color: #fff;
	font-size: 14px;
}

.lock {
	margin-left: 6px;
}

.secure {
	width: 34px;
	margin-left: 6px;
	padding-right: 0;
	border-right: 1px solid #c8c8c8;
	color: #0b8043;
	line-height: 17px;
}

.url {
	margin-left: 6px;
	font-size: 14.5px;
	color: #333;
	letter-spacing: 0.16px;
}

.url-green {
	color: #0b8043;
}

.url-dim {
	color: #8a8a8a;
}

.omni-icon {
	margin-left: auto;
	margin-right: 11px;
}

.omni-icon.star {
	margin-left: 0;
	margin-right: 6px;
}

.ext {
	width: 17px;
	height: 17px;
	margin: 1px 6px 0;
}

.ext.first {
	margin-left: 10px;
}

.dots {
	margin: 0 14px 0 9px;
}

.bookmarks {
	display: grid;
	grid-template-columns: 81px 154px 156px 152px 155px 154px 1fr auto;
	align-items: center;
	height: 27px;
	padding: 0 9px 0 13px;
	border-bottom: 1px solid #cfcfcf;
	background-color: #f2f2f2;
	font-size: 12px;
	color: #222;
	white-space: nowrap;
}

.bm {
	display: flex;
	align-items: center;
	letter-spacing: 0.4px;
}

.bm-leet {
	letter-spacing: 0.7px;
}

.bm .fav, .bm .fav-letter {
	margin-right: 3px;
}

.bm-grid {
	margin-right: 6px;
}

.bm-more {
	margin-right: 0;
	color: #333;
}

.bm-folder {
	margin: 0 4px 0 8px;
}

/* page */
.page {
	display: flex;
	position: relative;
	height: 593px;
	overflow: hidden;
	background-color: #fcfcfc;
}

.panel {
	flex: none;
	width: 840px;
	height: 571px;
	margin: 14px 0 0 44px;
	background-color: #fff;
}

.activity {
	position: relative;
	height: 468px;
}

.task-title {
	margin: 0;
	font-size: 24px;
	font-weight: normal;
	line-height: 27px;
	color: #111;
}

.expand {
	position: absolute;
	left: 793px;
	top: 23px;
	width: 27px;
	height: 27px;
}

.axis {
	position: absolute;
	left: 588px;
	top: 100px;
	width: 5px;
	height: 345px;
	background-color: #000;
	box-shadow: 0 0 2px #000;
}

.face {
	position: absolute;
}

.face-big {
	left: 564px;
	top: 49px;
	width: 58px;
	height: 58px;
}

.face-small {
	left: 575px;
	top: 439px;
	width: 30px;
	height: 30px;
}

.zone {
	position: absolute;
	box-sizing: border-box;
	width: 216px;
	height: 54px;
	padding: 2px;
	background-color: #f3f3f3;
}

.z-detest { left: 338px; top: 76px; width: 217px; padding-top: 1px; }
.z-loathe { left: 609px; top: 103px; }
.z-stand { left: 609px; top: 170px; }
.z-hate { left: 352px; top: 197px; }
.z-dislike { left: 352px; top: 319px; }
.z-dontlike { left: 609px; top: 319px; }
.z-really { left: 352px; top: 387px; }

.chip {
	position: relative;
	box-sizing: border-box;
	width: 126px;
	height: 41px;
	padding-left: 8.5px;
	border-radius: 4px;
	background-color: #9ad8bc;
	box-shadow: 0 0 3px rgba(0, 0, 0, 0.22);
	font-size: 22px;
	line-height: 42px;
	color: #255f45;
	white-space: nowrap;
}

.chip-mid {
	width: 190px;
}

.chip-long {
	width: 257px;
}

.tick {
	position: absolute;
	right: 7px;
	top: 15px;
	width: 20px;
	height: 16px;
}

/* score row */
.score {
	display: flex;
	align-items: center;
	height: 94px;
	border-top: 1px solid #ececec;
}

.score-bar {
	position: relative;
	width: 182px;
	height: 30px;
	border-radius: 15px 0 0 15px;
	background-color: #38b583;
}

.score-star {
	position: absolute;
	right: -46px;
	top: -12px;
	display: flex;
	justify-content: center;
	align-items: center;
	box-sizing: border-box;
	width: 54px;
	height: 54px;
	padding-right: 2px;
	border-radius: 50%;
	background-color: #38b583;
}

.score-text {
	margin-left: 61px;
	font-size: 20.5px;
	font-weight: bold;
	color: #1a73d8;
}

.side-links {
	list-style: none;
	margin: -16px 0 0 58px;
	padding: 0;
	font-size: 16px;
	line-height: 20px;
	color: #2087c5;
}

.side-links li {
	margin-bottom: 12.6px;
}

.side-links abbr {
	text-decoration: underline dotted #2087c5;
}

.to-top {
	position: absolute;
	left: 1168px;
	top: 495px;
	display: flex;
	justify-content: center;
	align-items: center;
	width: 72px;
	height: 72px;
	border-radius: 3px;
	background-color: #c8c8c8;
}

/* dock */
.dock {
	position: absolute;
	left: 23px;
	top: 735px;
	display: flex;
	align-items: flex-start;
	width: 1230px;
	height: 42px;
	padding-left: 3px;
	border-radius: 5px 5px 0 0;
	background: linear-gradient(90deg, #c9c9cd, #e4e4e8 9%, #dfdfe3 13%, #abc2c8 18%, #d6dede 23%, #c6dcc6 27%, #dcdde6 36%, #e4dfe2 42%, #f2d4bc 50%, #eeceb4 52%, #e2e2e6 56%, #d6dee8 60%, #a2cdf0 67%, #a8cee8 71%, #c2dac6 76%, #e2e2e6 84%, #e6e6ea 92%, #a8a4a4 96%, #5a504c);
}

.dock-item {
	position: relative;
	display: flex;
	justify-content: center;
	width: 31.9px;
	height: 42px;
	flex: none;
}

.dock-item svg {
	width: 30px;
	height: 32px;
	margin-top: 3px;
}

.dk-hash { font: bold 13px "Liberation Sans", sans-serif; fill: #23469a; }
.dk-fz { font: italic bold 24px "Liberation Sans", sans-serif; fill: #fff; }
.dk-term { font: bold 10px "Liberation Mono", monospace; fill: #35d04a; }
.dk-word { font: italic bold 25px "Liberation Sans", sans-serif; fill: #4c9bd8; }
.dk-pc { font: bold 11px "Liberation Sans", sans-serif; fill: #fff; }

.dock-item.running::after {
	content: "";
	position: absolute;
	left: 14px;
	bottom: 2px;
	width: 3px;
	height: 3px;
	border-radius: 50%;
	background-color: #333;
}

.dock-sep {
	flex: none;
	width: 1px;
	height: 36px;
	margin: 3px 5px 0 9px;
	background-color: #aaa;
}

.badge {
	position: absolute;
	right: -3px;
	top: 1px;
	width: 13px;
	height: 13px;
	border-radius: 50%;
	background-color: #f0303c;
	font-size: 8px;
	line-height: 13px;
	text-align: center;
	color: #fff;
}
```
